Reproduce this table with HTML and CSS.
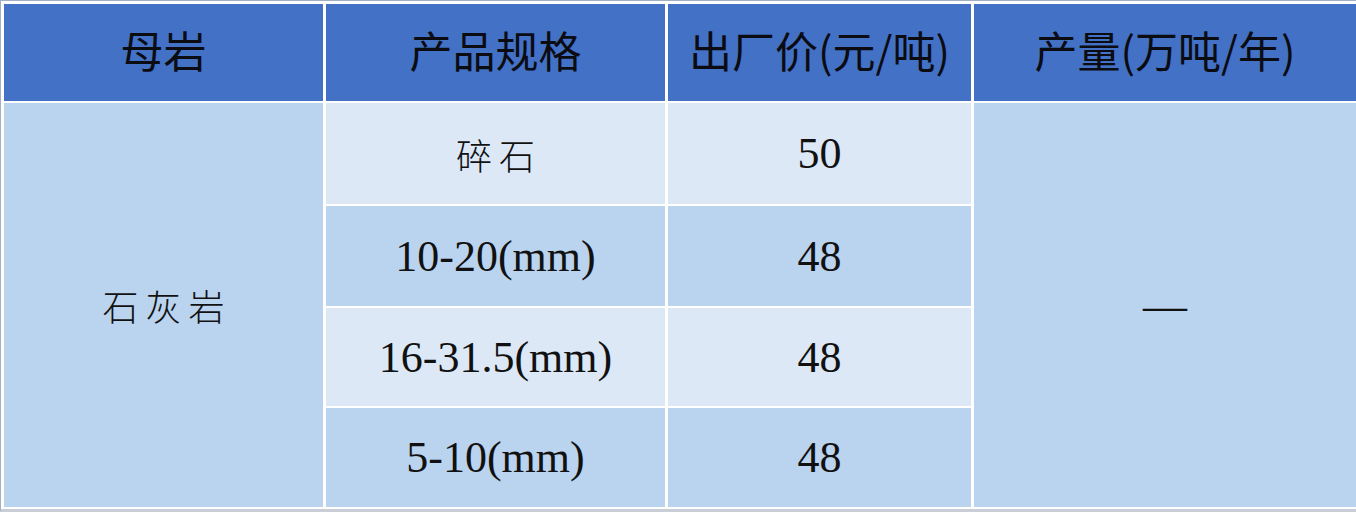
FILE: index.html
```html
<!DOCTYPE html>
<html lang="zh-CN">
<head>
<meta charset="utf-8">
<title>石灰岩价格表</title>
<link rel="stylesheet" href="styles.css">
</head>
<body>
<div class="frame">
  <div class="grid">
    <div class="cell head">母岩</div>
    <div class="cell head">产品规格</div>
    <div class="cell head">出厂价(元/吨)</div>
    <div class="cell head">产量(万吨/年)</div>

    <div class="cell merged rock cn">石灰岩</div>
    <div class="cell light cn">碎石</div>
    <div class="cell light num">50</div>
    <div class="cell merged output num">—</div>

    <div class="cell dark num">10-20(mm)</div>
    <div class="cell dark num">48</div>

    <div class="cell light num">16-31.5(mm)</div>
    <div class="cell light num">48</div>

    <div class="cell dark num">5-10(mm)</div>
    <div class="cell dark num">48</div>
  </div>
</div>
</body>
</html>
```

FILE: styles.css
```css
html, body {
  margin: 0;
  padding: 0;
  background: #ffffff;
}

.frame {
  width: 1356px;
  height: 512px;
  box-sizing: border-box;
  border-top: 1px solid #9fb0c8;
  border-left: 1px solid #9fb0c8;
  border-bottom: 3px solid #c9ced6;
  padding: 3px 0 2px 3px;
  background: #ffffff;
  overflow: hidden;
}

.grid {
  display: grid;
  grid-template-columns: 319px 339px 303px 1fr;
  grid-template-rows: 97px 101px 100px 98px 99px;
  column-gap: 3px;
  row-gap: 2px;
}

.cell {
  display: flex;
  align-items: center;
  justify-content: center;
  color: #111111;
  white-space: nowrap;
}

.head {
  background: #4271c5;
  font-family: "Noto Sans CJK SC", "Noto Sans", sans-serif;
  font-weight: 400;
  font-size: 43px;
  color: #0b0b12;
  padding-bottom: 8px;
  box-sizing: border-box;
}

.merged {
  grid-row: 2 / span 4;
  background: #bad3ef;
}

.rock {
  grid-column: 1;
}

.output {
  grid-column: 4;
}

.light {
  background: #dce8f6;
}

.dark {
  background: #bad3ef;
}

.cn {
  font-family: "Noto Sans CJK SC", sans-serif;
  font-weight: 300;
  font-size: 36px;
  letter-spacing: 7px;
  padding-left: 7px;
}

.num {
  font-family: "Liberation Serif", "Times New Roman", serif;
  font-size: 44px;
}
```
